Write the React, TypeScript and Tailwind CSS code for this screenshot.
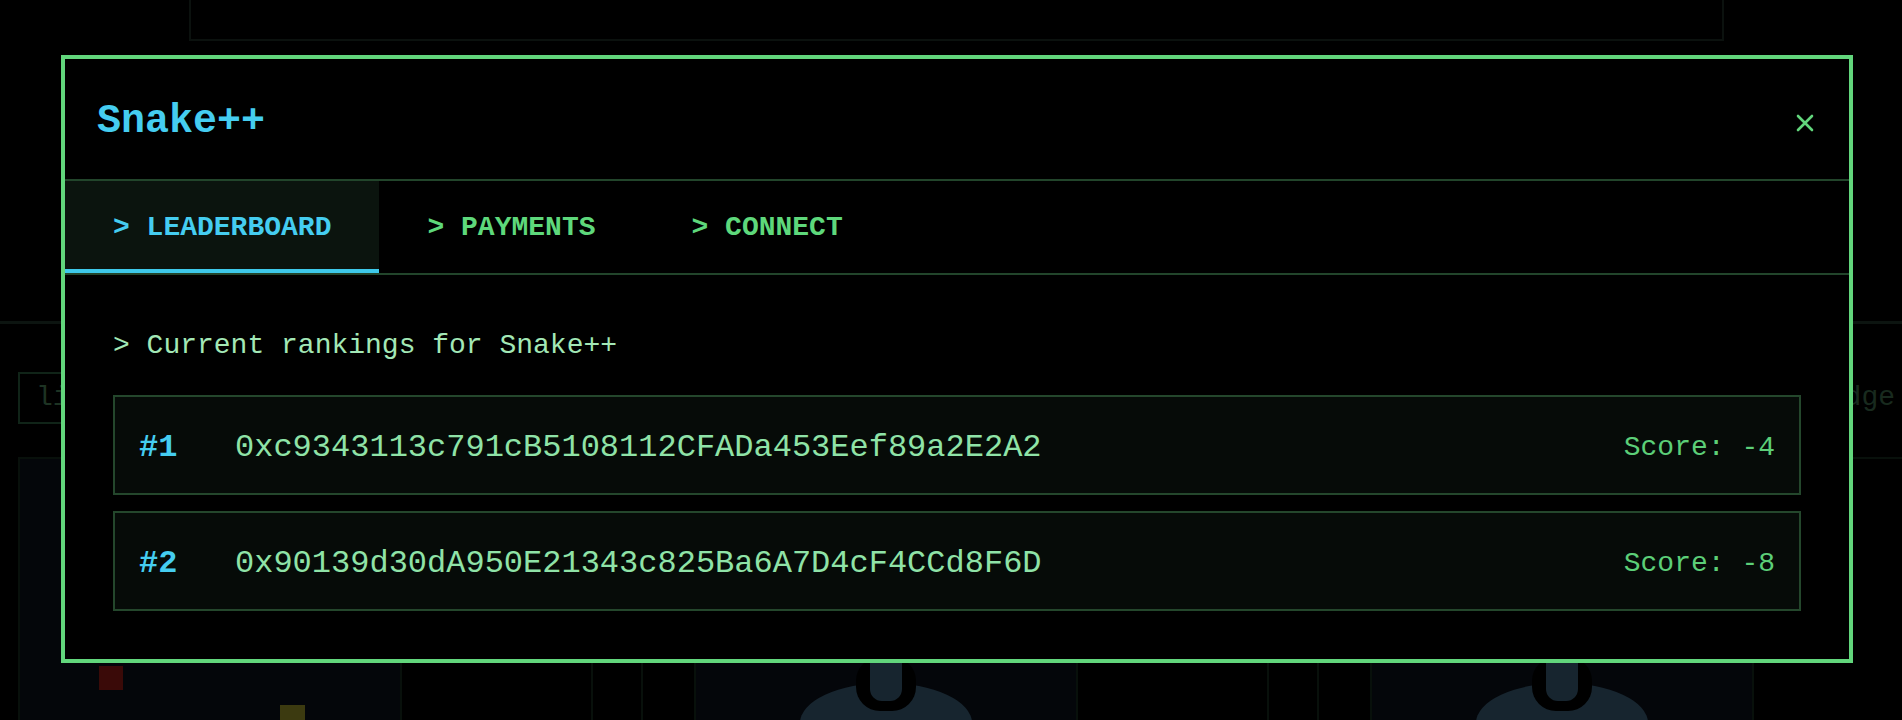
import React, { useState } from 'react';

const rankings = [
  { rank: 1, address: '0xc9343113c791cB5108112CFADa453Eef89a2E2A2', score: -4 },
  { rank: 2, address: '0x90139d30dA950E21343c825Ba6A7D4cF4CCd8F6D', score: -8 },
];

const tabs = ['LEADERBOARD', 'PAYMENTS', 'CONNECT'];

function Joystick() {
  return (
    <svg width="180" height="80" viewBox="0 0 180 80">
      <ellipse cx="90" cy="66" rx="86" ry="40" fill="#3a5d76" />
      <rect x="60" y="0" width="60" height="54" rx="24" fill="#000" />
      <rect x="74" y="-20" width="32" height="64" rx="12" fill="#3a5d76" />
    </svg>
  );
}

function GameCard({ children }: { children?: React.ReactNode }) {
  return (
    <div className="shrink-0 w-[625px] h-[300px] flex border-2 border-[#142a1c]">
      <div className="relative w-[382px] h-full bg-[#0a0f19] border-r-2 border-[#142a1c] flex justify-center">
        {children}
      </div>
      <div className="w-[191px] h-full border-r-2 border-[#142a1c]" />
    </div>
  );
}

export default function App() {
  const [activeTab, setActiveTab] = useState('LEADERBOARD');

  return (
    <div
      className="relative w-full h-[720px] overflow-hidden bg-black"
      style={{ fontFamily: '"Liberation Mono", "DejaVu Sans Mono", monospace' }}
    >
      {/* Page behind the dialog */}
      <div>
        <div className="ml-[189px] w-[1535px] h-[41px] border-2 border-t-0 border-[#1c2b23]" />
        <div className="mt-[280px] border-t-[3px] border-[#1e3228]" />
        <div className="mt-[48px] flex items-center justify-between pl-[18px] pr-[7px]">
          <div className="w-[320px] h-[52px] border-2 border-[#2a5a3c] flex items-center px-[16px] text-[28px] text-[#4a8058]">
            lichess
          </div>
          <span className="text-[28px] text-[#3d6a4b]">Edge</span>
        </div>
        <div className="mt-[33px] flex gap-[51px] pl-[18px]">
          <GameCard>
            <div className="absolute left-[79px] top-[207px] w-[24px] h-[24px] bg-[#921a14]" />
            <div className="absolute left-[260px] top-[246px] w-[25px] h-[25px] bg-[#969128]" />
          </GameCard>
          <GameCard>
            <div className="mt-[198px]">
              <Joystick />
            </div>
          </GameCard>
          <GameCard>
            <div className="mt-[198px]">
              <Joystick />
            </div>
          </GameCard>
        </div>
      </div>

      {/* Overlay + dialog */}
      <div className="absolute inset-0 bg-black/60 pl-[61px] pt-[55px]">
        <div className="w-[1792px] border-4 border-[#62d67c] bg-black">
          {/* Header */}
          <div className="flex items-center justify-between px-[32px] pt-[35px] pb-[29px] border-b-2 border-[#22452b]">
            <h2 className="text-[40px] leading-[56px] font-bold text-[#45cdf0]">Snake++</h2>
            <button className="mr-[3px] mt-[2px]">
              <svg width="18" height="18" viewBox="0 0 18 18" fill="none" stroke="#62d67c" strokeWidth="2.6" strokeLinecap="round">
                <path d="M2 2L16 16M16 2L2 16" />
              </svg>
            </button>
          </div>

          {/* Tabs */}
          <div className="flex border-b-2 border-[#22452b]">
            {tabs.map((tab) => (
              <button
                key={tab}
                onClick={() => setActiveTab(tab)}
                className={`px-[48px] pt-[27px] pb-[21px] text-[28px] leading-[40px] font-bold border-b-4 ${
                  activeTab === tab
                    ? 'bg-[#0b140e] text-[#45cdf0] border-[#3ec9ea]'
                    : 'text-[#5ed87b] border-transparent'
                }`}
              >
                {'> '}{tab}
              </button>
            ))}
          </div>

          {/* Leaderboard */}
          <div className="p-[48px]">
            <p className="text-[28px] leading-[40px] text-[#a3e8b6] pt-[3px] mb-[29px]">
              {'> Current rankings for Snake++'}
            </p>
            <div className="flex flex-col gap-[16px]">
              {rankings.map((r) => (
                <div
                  key={r.rank}
                  className="flex items-center px-[24px] pt-[27px] pb-[21px] border-2 border-[#24472c] bg-[#060b08]"
                >
                  <span className="w-[96px] text-[32px] leading-[48px] font-bold text-[#45cdf0]">#{r.rank}</span>
                  <span className="flex-1 text-[32px] leading-[48px] text-[#8fe3a7]">{r.address}</span>
                  <span className="text-[28px] leading-[48px] text-[#5ccf78]">Score: {r.score}</span>
                </div>
              ))}
            </div>
          </div>
        </div>
      </div>
    </div>
  );
}
